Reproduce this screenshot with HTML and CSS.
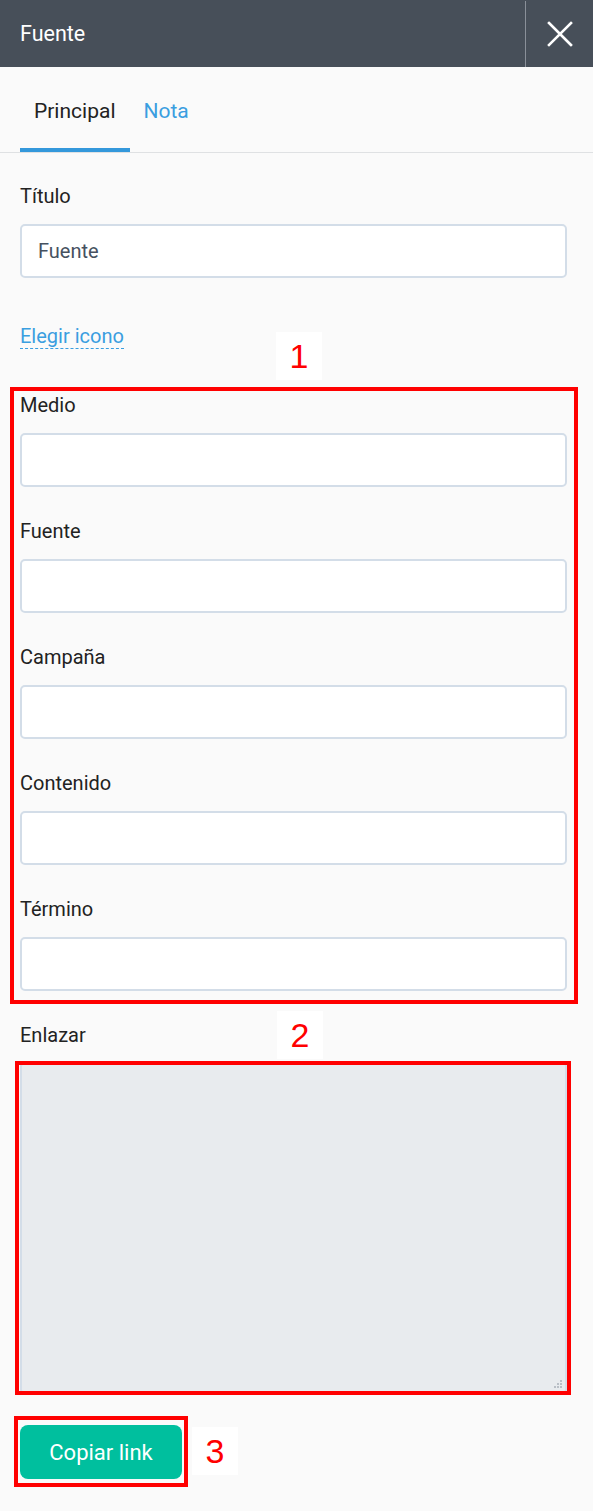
FILE: index.html
```html
<!DOCTYPE html>
<html lang="es">
<head>
<meta charset="UTF-8" />
<meta name="viewport" content="width=device-width, initial-scale=1.0" />
<title>Fuente</title>
<link rel="stylesheet" href="styles.css">
</head>
<body>

<header class="panel-head">
  <div class="panel-title">Fuente</div>
  <button class="panel-close" aria-label="Cerrar">
    <svg width="26" height="26" viewBox="0 0 26 26">
      <path d="M2 2 L24 24 M24 2 L2 24" stroke="#fff" stroke-width="2.6" stroke-linecap="square" fill="none" />
    </svg>
  </button>
</header>

<nav class="tabs">
  <span class="tab active">Principal</span>
  <span class="tab">Nota</span>
</nav>

<div class="form">
  <!-- título -->
  <div class="field">
    <label for="titulo">Título</label>
    <input id="titulo" type="text" value="Fuente" />
  </div>

  <a class="icon-link" href="#">Elegir icono</a>

  <!-- parámetros utm -->
  <div class="utm">
    <div class="field">
      <label for="medio">Medio</label>
      <input id="medio" type="text" />
    </div>
    <div class="field">
      <label for="fuente">Fuente</label>
      <input id="fuente" type="text" />
    </div>
    <div class="field">
      <label for="campana">Campaña</label>
      <input id="campana" type="text" />
    </div>
    <div class="field">
      <label for="contenido">Contenido</label>
      <input id="contenido" type="text" />
    </div>
    <div class="field">
      <label for="termino">Término</label>
      <input id="termino" type="text" />
    </div>
  </div>

  <div class="field">
    <label for="enlazar">Enlazar</label>
    <div class="area-wrap">
      <textarea id="enlazar" readonly></textarea>
      <span class="grip"></span>
    </div>
  </div>

  <button class="copy-btn">Copiar link</button>
</div>

<!-- marcas de anotación -->
<div class="mark box1"></div>
<div class="mark box2"></div>
<div class="mark box3"></div>
<div class="num num1">1</div>
<div class="num num2">2</div>
<div class="num num3">3</div>

</body>
</html>
```

FILE: styles.css
```css
body {
  margin: 0;
  padding: 0;
  background-color: #fafafa;
  font-family: Roboto, "Liberation Sans", sans-serif;
  color: #222;
  position: relative;
  min-height: 1511px;
}
.panel-head {
  background-color: #474f59;
  height: 67px;
  display: flex;
  align-items: center;
}
.panel-title {
  flex: 1;
  color: #fff;
  font-size: 21.5px;
  padding-left: 20px;
}
.panel-close {
  width: 68px;
  height: 66px;
  margin-top: 1px;
  border: none;
  border-left: 1px solid #8a9099;
  background: transparent;
  display: flex;
  align-items: center;
  justify-content: center;
  padding: 0;
  cursor: pointer;
}
.tabs {
  display: flex;
  padding-left: 20px;
  border-bottom: 1px solid #dfe1e3;
  height: 86px;
  box-sizing: border-box;
}
.tab {
  font-size: 21px;
  padding: 32px 14px 0;
  color: #3a9ee0;
  box-sizing: border-box;
  height: 85px;
}
.tab.active {
  color: #222;
  border-bottom: 4px solid #3498db;
}
.form {
  padding: 31px 26px 0 20px;
}
.field {
  display: flex;
  flex-direction: column;
  margin-bottom: 32px;
}
.field label {
  font-size: 20px;
  line-height: 24px;
  margin-bottom: 16px;
}
.field input {
  height: 54px;
  box-sizing: border-box;
  border: 2px solid #d3dde8;
  border-radius: 5px;
  background: #fff;
  padding: 0 16px;
  font-family: inherit;
  font-size: 20px;
  color: #465160;
  outline: none;
}
.area-wrap {
  position: relative;
  display: flex;
}
.area-wrap textarea {
  flex: 1;
  height: 330px;
  box-sizing: border-box;
  border: 2px solid #d3dde8;
  border-radius: 3px;
  background: #e8ebee;
  font-family: inherit;
  resize: none;
  outline: none;
}
.grip {
  position: absolute;
  right: 5px;
  bottom: 5px;
  width: 8px;
  height: 8px;
  background:
    linear-gradient(#b9bfc6, #b9bfc6) 6px 0 / 2px 2px no-repeat,
    linear-gradient(#b9bfc6, #b9bfc6) 3px 3px / 2px 2px no-repeat,
    linear-gradient(#b9bfc6, #b9bfc6) 6px 3px / 2px 2px no-repeat,
    linear-gradient(#b9bfc6, #b9bfc6) 0 6px / 2px 2px no-repeat,
    linear-gradient(#b9bfc6, #b9bfc6) 3px 6px / 2px 2px no-repeat,
    linear-gradient(#b9bfc6, #b9bfc6) 6px 6px / 2px 2px no-repeat;
}
.icon-link {
  display: inline-block;
  font-size: 20px;
  line-height: 24px;
  color: #3a9ee0;
  text-decoration: none;
  border-bottom: 1px dashed #3a9ee0;
  margin-top: 14px;
  margin-bottom: 44px;
}
.copy-btn {
  width: 162px;
  height: 54px;
  border: none;
  border-radius: 8px;
  background-color: #00bf9e;
  color: #fff;
  font-family: inherit;
  font-size: 22px;
  cursor: pointer;
}
.mark {
  position: absolute;
  border: 4px solid #ff0000;
  box-sizing: border-box;
}
.box1 {
  left: 10px;
  top: 387px;
  width: 568px;
  height: 617px;
}
.box2 {
  left: 15px;
  top: 1061px;
  width: 556px;
  height: 334px;
}
.box3 {
  left: 14px;
  top: 1416px;
  width: 174px;
  height: 71px;
}
.num {
  position: absolute;
  background: #fff;
  color: #ff0000;
  font-family: "Liberation Sans", Arial, sans-serif;
  font-size: 34px;
  width: 46px;
  height: 48px;
  line-height: 48px;
  text-align: center;
}
.num1 {
  left: 276px;
  top: 332px;
}
.num2 {
  left: 277px;
  top: 1011px;
}
.num3 {
  left: 192px;
  top: 1427px;
}
```
